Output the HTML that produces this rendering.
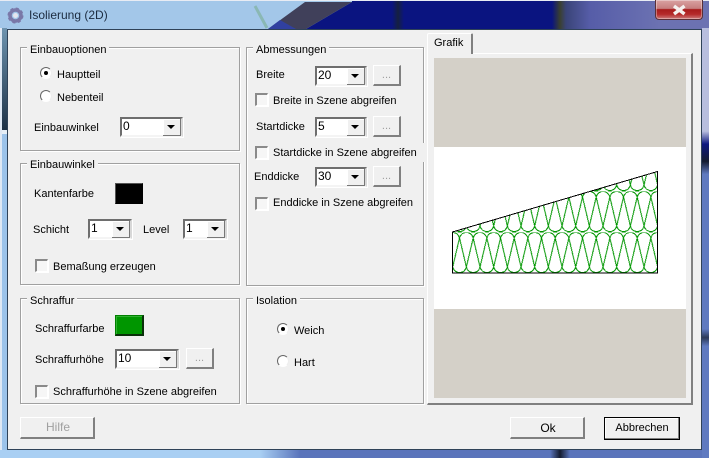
<!DOCTYPE html>
<html><head><meta charset="utf-8"><style>
html,body{margin:0;padding:0}
body{width:709px;height:458px;overflow:hidden;position:relative;background:#5b76bc;font:11px/14px "Liberation Sans",sans-serif;color:#000}
div,span{position:absolute;box-sizing:border-box}
.t{white-space:nowrap;height:14px;margin-top:1px}
.g{border:1px solid #a0a0a0;box-shadow:1px 1px 0 #fff,inset 1px 1px 0 #fff}
.l{background:#f0f0f0;padding:1px 3px 0;white-space:nowrap;height:15px}
.c{background:#fff;border:2px solid #6e6e6e;border-right-color:#d8d8d8;border-bottom-color:#f4f4f4;box-shadow:1px 1px 0 #fff;padding:0 1px;line-height:15px;font-size:12px;height:20px}
.c i{position:absolute;right:0;top:0;width:17px;height:16px;background:#f0f0f0;border-right:1px solid #777;border-bottom:1px solid #777;box-shadow:inset 1px 1px 0 #fff}
.c i:after{content:"";position:absolute;left:4px;top:6px;border:4px solid transparent;border-top:4px solid #000;border-bottom:0}
.b{background:#f0f0f0;border:1px solid #fff;border-right:2px solid #808080;border-bottom:2px solid #808080;text-align:center;color:#a0a0a0;line-height:19px}
.k{width:13px;height:13px;background:#f6f6f6;border:1px solid #fff;border-top:2px solid #8a8a8a;border-left:2px solid #8a8a8a;box-shadow:1px 1px 0 #fff}
.r{width:12px;height:12px;border-radius:50%;background:#fff;border:1px solid;border-color:#666 #eee #fff #666}
.r.o:after{content:"";position:absolute;left:3px;top:3px;width:4px;height:4px;border-radius:50%;background:#000}
</style></head><body>
<div style="left:0;top:0;width:709px;height:2px;background:#e8ecf4"></div>
<div style="left:0;top:1px;width:709px;height:28px;background:linear-gradient(90deg,#a3c7e9 0,#a3c7e9 352px,#0a1480 352px,#0a1480 392px,#152040 398px,#0a1480 404px,#0a1480 552px,#3a4030 560px,#3a4478 566px,#565da8 590px,#6c72b2 660px,#6c72b2 709px)"></div>
<svg style="position:absolute;left:0;top:1px" width="709" height="28"><path d="M306 28L352 1H360V28Z" fill="#0a1480"/><path d="M268 28L305 1H352L306 28Z" fill="#40405a"/><path d="M268 28L280 19L296 28Z" fill="#3040a0"/><path d="M255 5L267 27" stroke="#8ab8b4" stroke-width="3" fill="none"/></svg>
<div style="left:0;top:28px;width:2px;height:430px;background:#dfe8f4"></div>
<div style="left:2px;top:28px;width:5px;height:102px;background:linear-gradient(#6e94b0,#1d3146)"></div>
<div style="left:2px;top:130px;width:5px;height:4px;background:#e6eef6"></div>
<div style="left:2px;top:134px;width:5px;height:316px;background:#9cc3ea"></div>
<div style="left:0;top:450px;width:709px;height:8px;background:linear-gradient(90deg,#a9cff3 0,#a9cff3 260px,#5a74bb 300px,#5a74bb 550px,#141c30 560px,#5a74bb 570px)"></div>
<div style="left:702px;top:28px;width:7px;height:430px;background:linear-gradient(#b8bede 0,#b8bede 24%,#0d1880 27%,#141c30 31%,#5f7ac0 34%,#5f7ac0 70%,#2c3a58 72%,#5f7ac0 74%)"></div>
<div style="left:7px;top:29px;width:695px;height:421px;background:#f0f0f0;border:1px solid #2f4258"></div>

<svg style="position:absolute;left:7px;top:7px" width="17" height="17" viewBox="0 0 17 17"><circle cx="8.5" cy="8.5" r="5.5" fill="none" stroke="#7a78a8" stroke-width="3.5"/><circle cx="8.5" cy="8.5" r="7" fill="none" stroke="#7a78a8" stroke-width="2" stroke-dasharray="3 2.5"/><circle cx="8.5" cy="8.5" r="2.5" fill="#e4e4ee"/></svg>
<div class="t" style="left:29px;top:7px;font-size:12px;color:#1c2c40">Isolierung (2D)</div>
<div style="left:655px;top:0;width:48px;height:20px;border:1px solid #5a3038;border-top:0;border-radius:0 0 4px 4px;background:linear-gradient(#d9a2a2 0,#c67e7e 45%,#a81c1c 50%,#b52a2a 75%,#cc7a7a 100%);box-shadow:inset 0 0 0 1px rgba(255,255,255,.35)"></div>
<svg style="position:absolute;left:672px;top:4px" width="15" height="12"><path d="M2 2L12.5 10M12.5 2L2 10" stroke="#f4f0ee" stroke-width="3.4" fill="none"/></svg>

<div class="g" style="left:20px;top:47px;width:220px;height:104px"></div>
<div class="g" style="left:20px;top:163px;width:220px;height:122px"></div>
<div class="g" style="left:20px;top:298px;width:220px;height:106px"></div>
<div class="g" style="left:246px;top:47px;width:178px;height:239px"></div>
<div class="g" style="left:246px;top:298px;width:178px;height:106px"></div>

<div class="l" style="left:27px;top:42px">Einbauoptionen</div>
<div class="r o" style="left:40px;top:67px"></div><div class="t" style="left:57px;top:67px">Hauptteil</div>
<div class="r" style="left:40px;top:90px"></div><div class="t" style="left:57px;top:90px">Nebenteil</div>
<div class="t" style="left:34px;top:120px">Einbauwinkel</div>
<div class="c" style="left:120px;top:117px;width:63px">0<i></i></div>

<div class="l" style="left:27px;top:157px">Einbauwinkel</div>
<div class="t" style="left:34px;top:186px">Kantenfarbe</div>
<div style="left:115px;top:183px;width:28px;height:21px;background:#000;border:1px solid #555;border-right-color:#000;border-bottom-color:#000"></div>
<div class="t" style="left:33px;top:222px">Schicht</div>
<div class="c" style="left:88px;top:219px;width:44px">1<i></i></div>
<div class="t" style="left:143px;top:222px">Level</div>
<div class="c" style="left:183px;top:219px;width:44px">1<i></i></div>
<div class="k" style="left:35px;top:259px"></div><div class="t" style="left:53px;top:259px">Bemaßung erzeugen</div>

<div class="l" style="left:27px;top:293px">Schraffur</div>
<div class="t" style="left:35px;top:321px">Schraffurfarbe</div>
<div style="left:115px;top:315px;width:29px;height:21px;background:#009600;border:1px solid #008000;border-right:2px solid #0a300a;border-bottom:2px solid #0a300a;box-shadow:inset 1px 1px 0 #30b030"></div>
<div class="t" style="left:35px;top:352px">Schraffurhöhe</div>
<div class="c" style="left:115px;top:349px;width:64px">10<i></i></div>
<div class="b" style="left:186px;top:348px;width:28px;height:21px">...</div>
<div class="k" style="left:35px;top:385px"></div><div class="t" style="left:53px;top:384px">Schraffurhöhe in Szene abgreifen</div>

<div class="l" style="left:253px;top:42px">Abmessungen</div>
<div class="t" style="left:256px;top:67px">Breite</div>
<div class="c" style="left:315px;top:66px;width:52px">20<i></i></div>
<div class="b" style="left:373px;top:65px;width:28px;height:21px">...</div>
<div class="k" style="left:255px;top:93px"></div><div class="t" style="left:273px;top:93px">Breite in Szene abgreifen</div>
<div class="t" style="left:256px;top:119px">Startdicke</div>
<div class="c" style="left:315px;top:117px;width:52px">5<i></i></div>
<div class="b" style="left:373px;top:116px;width:28px;height:21px">...</div>
<div class="k" style="left:255px;top:146px"></div>
<div class="l" style="left:270px;top:143px;width:156px;height:19px;padding-top:3px">Startdicke in Szene abgreifen</div>
<div class="t" style="left:254px;top:169px">Enddicke</div>
<div class="c" style="left:315px;top:167px;width:52px">30<i></i></div>
<div class="b" style="left:373px;top:166px;width:28px;height:21px">...</div>
<div class="k" style="left:255px;top:197px"></div><div class="t" style="left:273px;top:195px">Enddicke in Szene abgreifen</div>

<div class="l" style="left:253px;top:293px">Isolation</div>
<div class="r o" style="left:277px;top:323px"></div><div class="t" style="left:294px;top:323px">Weich</div>
<div class="r" style="left:277px;top:355px"></div><div class="t" style="left:294px;top:355px">Hart</div>

<div style="left:427px;top:53px;width:266px;height:352px;background:#f0f0f0;border:1px solid #fff;border-right:2px solid #808080;border-bottom:2px solid #808080"></div>
<div style="left:427px;top:33px;width:46px;height:21px;background:#f0f0f0;border:1px solid #fff;border-right:2px solid #808080;border-bottom:0;border-radius:2px 2px 0 0"></div>
<div class="t" style="left:434px;top:35px">Grafik</div>
<div style="left:434px;top:58px;width:252px;height:89px;background:#d4d0c8"></div>
<div style="left:434px;top:147px;width:252px;height:162px;background:#fff"></div>
<div style="left:434px;top:309px;width:252px;height:89px;background:#d4d0c8"></div>

<svg style="position:absolute;left:440px;top:160px" width="230" height="125">
<defs>
<path id="s" d="M0 6C1 2.5 3 .5 6.83 .5S12.6 2.5 13.67 6L20.5 35C21.5 38.5 23.5 40.5 27.33 40.5S33.2 38.5 34.17 35L41 6" fill="none" stroke="#009600" stroke-width="1" shape-rendering="crispEdges"/>
<pattern id="h" patternUnits="userSpaceOnUse" x="12.7" y="-10" width="41" height="41">
<use href="#s" x="-34.17"/><use href="#s" x="-20.5"/><use href="#s" x="-6.83"/><use href="#s" x="6.83"/><use href="#s" x="20.5"/><use href="#s" x="34.17"/>
</pattern>
</defs>
<path d="M12.5 72L217.5 11.5V113H12.5Z" fill="url(#h)"/>
<path d="M12.5 72L217.5 11.5V113H12.5Z" fill="none" stroke="#000" stroke-width="1" shape-rendering="crispEdges"/>
</svg>

<div class="b" style="left:20px;top:417px;width:75px;height:22px;font-size:12px;padding-left:2px">Hilfe</div>
<div class="b" style="left:510px;top:417px;width:75px;height:22px;color:#000;font-size:12px;line-height:20px;padding-left:2px">Ok</div>
<div class="b" style="left:604px;top:417px;width:76px;height:23px;color:#000;font-size:11px;line-height:21px;border:1px solid #000;box-shadow:inset -1px -1px 0 #808080,inset 1px 1px 0 #fff">Abbrechen</div>
</body></html>
